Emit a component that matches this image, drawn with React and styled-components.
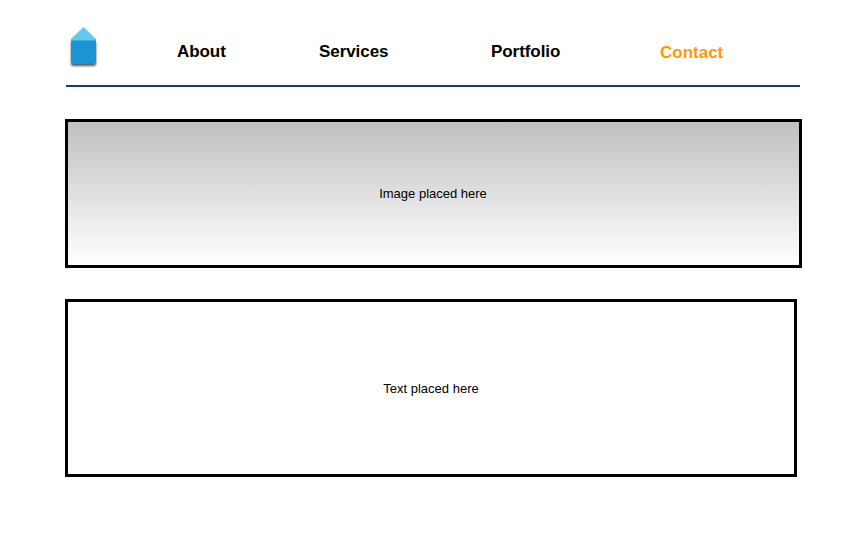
import React from "react";
import styled, { createGlobalStyle } from "styled-components";

const GlobalStyle = createGlobalStyle`
  * { box-sizing: border-box; }
  body { margin: 0; background: #fff; color: #000; font-family: "Liberation Sans", Arial, sans-serif; }
`;

const Page = styled.div`
  width: 868px;
  height: 543px;
  padding: 25px 0 0 65px;
  overflow: hidden;
`;

const Header = styled.header`
  display: flex;
  width: 734px;
  height: 62px;
  margin-left: 1px;
  border-bottom: 2px solid #1f3480;
`;

const HomeLink = styled.a`
  width: 36px;
  height: 46px;
`;

const Nav = styled.nav`
  display: flex;
  padding: 17px 0 0 75px;
`;

const NavLink = styled.a`
  width: ${(p) => p.$width}px;
  padding-top: ${(p) => (p.$active ? 1 : 0)}px;
  font-size: 17px;
  line-height: 20px;
  font-weight: 700;
  letter-spacing: ${(p) => (p.$active ? 0 : -0.06)}px;
  color: ${(p) => (p.$active ? "#ff9900" : "#000")};
`;

const Panel = styled.section`
  display: flex;
  align-items: center;
  justify-content: center;
  border: 3px solid #000;
  font-size: 13px;
  line-height: 16px;
`;

const ImagePanel = styled(Panel)`
  width: 737px;
  height: 149px;
  margin-top: 32px;
  padding-right: 1px;
  background: linear-gradient(#c0c0c0, #fff) padding-box;
`;

const TextPanel = styled(Panel)`
  width: 732px;
  height: 178px;
  margin-top: 31px;
  padding-top: 2px;
`;

const HomeIcon = () => (
  <svg width="36" height="46" viewBox="0 0 36 46" aria-hidden="true">
    <defs>
      <filter id="shadow" x="-20%" y="-20%" width="140%" height="150%">
        <feDropShadow dx="0" dy="2" stdDeviation="1" floodColor="#000" floodOpacity="0.65" />
      </filter>
    </defs>
    <g filter="url(#shadow)">
      <path d="M5 15h25v22q0 2-2 2H7q-2 0-2-2z" fill="#1d93d2" />
    </g>
    <path d="M17.500 2L30 14v1.500H5v-1.500z" fill="#62c9ec" />
  </svg>
);

const links = [
  { label: "About", width: 142 },
  { label: "Services", width: 172 },
  { label: "Portfolio", width: 169 },
  { label: "Contact", width: 70, active: true },
];

export default function App() {
  return (
    <Page>
      <GlobalStyle />
      <Header>
        <HomeLink aria-label="Home"><HomeIcon /></HomeLink>
        <Nav>
          {links.map((l) => (
            <NavLink key={l.label} $width={l.width} $active={l.active}>{l.label}</NavLink>
          ))}
        </Nav>
      </Header>
      <ImagePanel>Image placed here</ImagePanel>
      <TextPanel>Text placed here</TextPanel>
    </Page>
  );
}
